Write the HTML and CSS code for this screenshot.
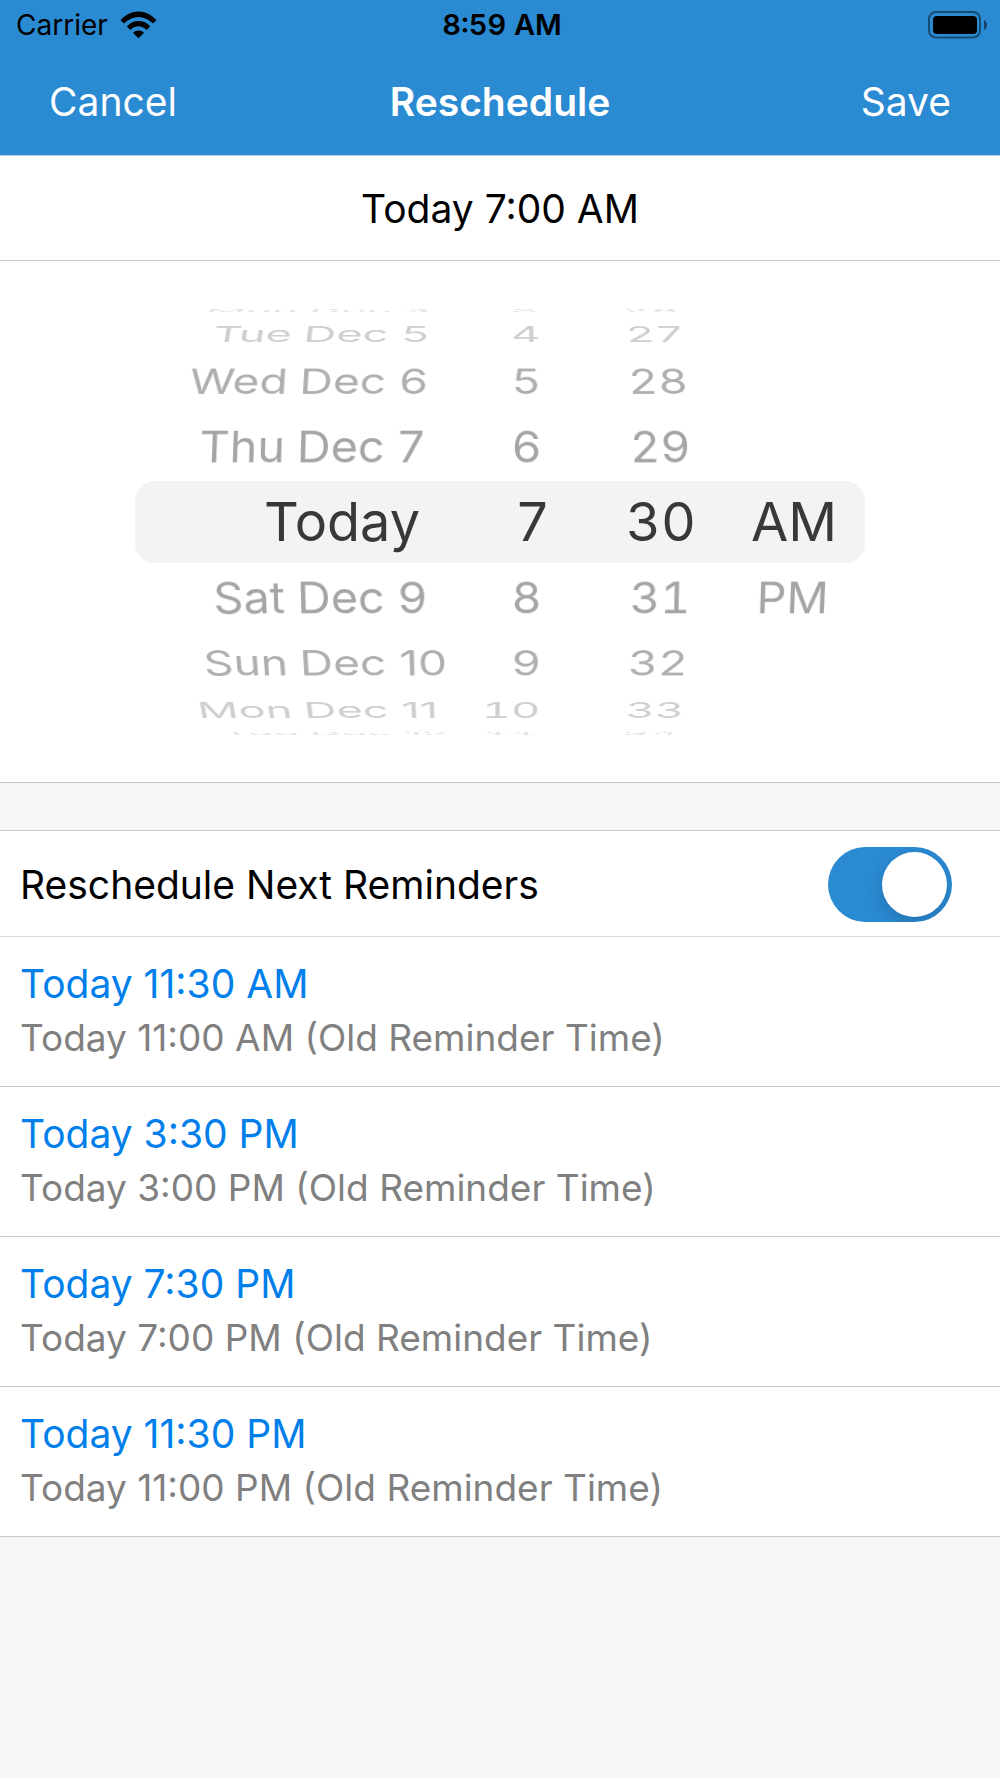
FILE: index.html
```html
<!DOCTYPE html>
<html lang="en">
<head>
<meta charset="utf-8">
<meta name="viewport" content="width=device-width, initial-scale=1">
<title>Reschedule</title>
<link rel="stylesheet" href="styles.css">
</head>
<body>
<header class="top">
  <div class="status">
    <div class="carrier">
      <span>Carrier</span>
      <svg class="wifi" viewBox="0 0 37 28" aria-hidden="true">
        <path d="M0.6 9.2C10.2-2.4 26.800-2.4 36.400 9.200L33 12.600C24.500 3.700 12.500 3.700 4 12.600Z"/>
        <path d="M6.800 15.500C13.200 8.300 23.800 8.300 30.200 15.500L26.600 19C21.600 14 15.400 14 10.400 19Z"/>
        <path d="M13 21.700C16 18.700 21 18.700 24 21.700L18.500 27.200Z"/>
      </svg>
    </div>
    <time class="clock">8:59 AM</time>
    <svg class="battery" viewBox="0 0 60 28" aria-hidden="true">
      <rect x="1" y="1" width="51" height="25.500" rx="7" fill="none" stroke="#000" stroke-opacity=".45" stroke-width="2"/>
      <rect x="5" y="5" width="44" height="18" rx="4"/>
      <path d="M56 9C60 11 60 17 56 19Z" fill-opacity=".5"/>
    </svg>
  </div>
  <nav class="nav">
    <button class="nav-btn" type="button">Cancel</button>
    <h1 class="title">Reschedule</h1>
    <button class="nav-btn nav-save" type="button">Save</button>
  </nav>
</header>
<main>
  <p class="current">Today 7:00 AM</p>
  <section class="picker" aria-label="Reminder time">
    <div class="wheels">
      <div class="wheel wheel-date" role="listbox" aria-label="Date">
        <div class="row up4" role="option"><span>Mon</span><span>Dec 4</span></div>
        <div class="row up3" role="option"><span>Tue</span><span>Dec 5</span></div>
        <div class="row up2" role="option"><span>Wed</span><span>Dec 6</span></div>
        <div class="row up1" role="option"><span>Thu</span><span>Dec 7</span></div>
        <div class="row selected" role="option" aria-selected="true">Today</div>
        <div class="row down1" role="option"><span>Sat</span><span>Dec 9</span></div>
        <div class="row down2" role="option"><span>Sun</span><span>Dec 10</span></div>
        <div class="row down3" role="option"><span>Mon</span><span>Dec 11</span></div>
        <div class="row down4" role="option"><span>Tue</span><span>Dec 12</span></div>
      </div>
      <div class="wheel wheel-hour" role="listbox" aria-label="Hour">
        <div class="row up4" role="option">3</div>
        <div class="row up3" role="option">4</div>
        <div class="row up2" role="option">5</div>
        <div class="row up1" role="option">6</div>
        <div class="row selected" role="option" aria-selected="true">7</div>
        <div class="row down1" role="option">8</div>
        <div class="row down2" role="option">9</div>
        <div class="row down3" role="option">10</div>
        <div class="row down4" role="option">11</div>
      </div>
      <div class="wheel wheel-minute" role="listbox" aria-label="Minute">
        <div class="row up4" role="option">26</div>
        <div class="row up3" role="option">27</div>
        <div class="row up2" role="option">28</div>
        <div class="row up1" role="option">29</div>
        <div class="row selected" role="option" aria-selected="true">30</div>
        <div class="row down1" role="option">31</div>
        <div class="row down2" role="option">32</div>
        <div class="row down3" role="option">33</div>
        <div class="row down4" role="option">34</div>
      </div>
      <div class="wheel wheel-period" role="listbox" aria-label="AM or PM">
        <div class="row selected" role="option" aria-selected="true">AM</div>
        <div class="row down1" role="option">PM</div>
      </div>
    </div>
  </section>
  <section class="group">
    <div class="setting">
      <label for="next">Reschedule Next Reminders</label>
      <input class="switch" id="next" type="checkbox" role="switch" checked>
    </div>
    <ul class="reminders">
      <li class="reminder"><p class="new">Today 11:30 AM</p><p class="old">Today 11:00 AM (Old Reminder Time)</p></li>
      <li class="reminder"><p class="new">Today 3:30 PM</p><p class="old">Today 3:00 PM (Old Reminder Time)</p></li>
      <li class="reminder"><p class="new">Today 7:30 PM</p><p class="old">Today 7:00 PM (Old Reminder Time)</p></li>
      <li class="reminder"><p class="new">Today 11:30 PM</p><p class="old">Today 11:00 PM (Old Reminder Time)</p></li>
    </ul>
  </section>
</main>
</body>
</html>
```
FILE: styles.css
```css
* { box-sizing: border-box; }

body {
  margin: 0;
  min-height: 100vh;
  background: #f7f7f7;
  color: #000;
  font-family: Inter, "Liberation Sans", sans-serif;
  font-size: 39px;
  line-height: 54px;
}

p, h1, ul { margin: 0; padding: 0; }

/* Header */
.top { background: #2a8ad2; border-bottom: 1px solid #b9cbd9; }

.status {
  display: grid;
  grid-template-columns: 1fr auto 1fr;
  align-items: center;
  height: 50px;
  padding: 0 12px 0 16px;
  font-size: 28px;
  line-height: 50px;
}
.carrier { display: flex; align-items: center; gap: 12px; }
.wifi { width: 37px; height: 28px; }
.clock { font-size: 29px; font-weight: 600; font-variant-numeric: tabular-nums; }
.battery { width: 60px; height: 28px; justify-self: end; }

.nav {
  display: grid;
  grid-template-columns: 1fr auto 1fr;
  align-items: center;
  height: 105px;
  padding: 0 49px 2px;
}
.title { color: #fff; font-size: 39px; font-weight: 600; line-height: 54px; }
.nav-btn {
  justify-self: start;
  padding: 0;
  border: 0;
  background: none;
  color: #fff;
  font: inherit;
}
.nav-save { justify-self: end; }

.current {
  padding: 26px 20px 24px;
  background: #fff;
  border-bottom: 1px solid #c8c8c8;
  text-align: center;
}

/* Date and time picker: rows sit on a cylinder, 19 degrees apart */
.picker {
  padding: 40px 20px;
  background: #fff;
  border-bottom: 1px solid #c8c8c8;
}
.wheels {
  display: grid;
  grid-template-columns: 315px 100px 184px 120px;
  align-items: center;
  max-width: 730px;
  height: 441px;
  margin: 0 auto;
  perspective: 2700px;
}
.wheels::before {
  content: "";
  grid-area: 1 / 1 / 2 / -1;
  height: 82px;
  margin-right: -11px;
  border-radius: 20px;
  background: #f3f3f3;
}
.wheel {
  display: grid;
  grid-row: 1;
  height: 82px;
  font-size: 47px;
  font-variant-numeric: tabular-nums;
  line-height: 82px;
  transform-style: preserve-3d;
}
.row { grid-area: 1 / 1; white-space: nowrap; }
.wheel-date { grid-column: 1; font-variant-numeric: normal; }
.wheel-hour { grid-column: 2; text-align: right; }
.wheel-minute { grid-column: 3; padding-left: 38px; text-align: center; }
.wheel-period { grid-column: 4; text-align: center; }

.wheel-date .row {
  display: grid;
  grid-template-columns: 1fr 154px;
  gap: 12px;
}
.wheel-date .row span:first-child { text-align: right; }
.wheel-date .selected { display: block; padding-right: 30px; text-align: right; }
.wheel-hour .row { padding-right: 8px; }

.wheel .selected { color: #383838; font-size: 54px; }
.wheel-hour .selected { padding-right: 0; }
.up1 { color: #a5a5a5; transform: translateZ(-233px) rotateX(19deg) translateZ(233px); }
.up2 { color: #afafaf; transform: translateZ(-233px) rotateX(38deg) translateZ(233px); }
.up3 { color: #cfcfcf; transform: translateZ(-233px) rotateX(57deg) translateZ(233px); }
.up4 { color: #e4e4e4; transform: translateZ(-233px) rotateX(80deg) translateZ(230px); }
.down1 { color: #a5a5a5; transform: translateZ(-233px) rotateX(-19deg) translateZ(233px); }
.down2 { color: #afafaf; transform: translateZ(-233px) rotateX(-38deg) translateZ(233px); }
.down3 { color: #cfcfcf; transform: translateZ(-233px) rotateX(-57deg) translateZ(233px); }
.down4 { color: #e4e4e4; transform: translateZ(-233px) rotateX(-80deg) translateZ(230px); }

/* Reminder list */
.group { margin-top: 47px; background: #fff; border-top: 1px solid #c8c8c8; }
.setting {
  display: flex;
  align-items: center;
  justify-content: space-between;
  min-height: 106px;
  padding: 2px 48px 0 20px;
  border-bottom: 1px solid #dcdcdc;
}
.switch {
  display: flex;
  justify-content: flex-end;
  width: 124px;
  height: 75px;
  margin: 0;
  padding: 5px;
  overflow: hidden;
  border-radius: 38px;
  background: #2a8ad2;
  appearance: none;
}
.switch::before {
  content: "";
  width: 65px;
  height: 65px;
  border-radius: 50%;
  background: #fff;
  box-shadow: 0 6px 16px rgba(0, 0, 0, .16);
}
.switch:not(:checked) { justify-content: flex-start; background: #e5e5e5; }

.reminders { list-style: none; }
.reminder { padding: 20px 20px 21px; border-bottom: 1px solid #c8c8c8; }
.new { color: #007fea; }
.old { color: #808080; font-size: 37px; }
```
